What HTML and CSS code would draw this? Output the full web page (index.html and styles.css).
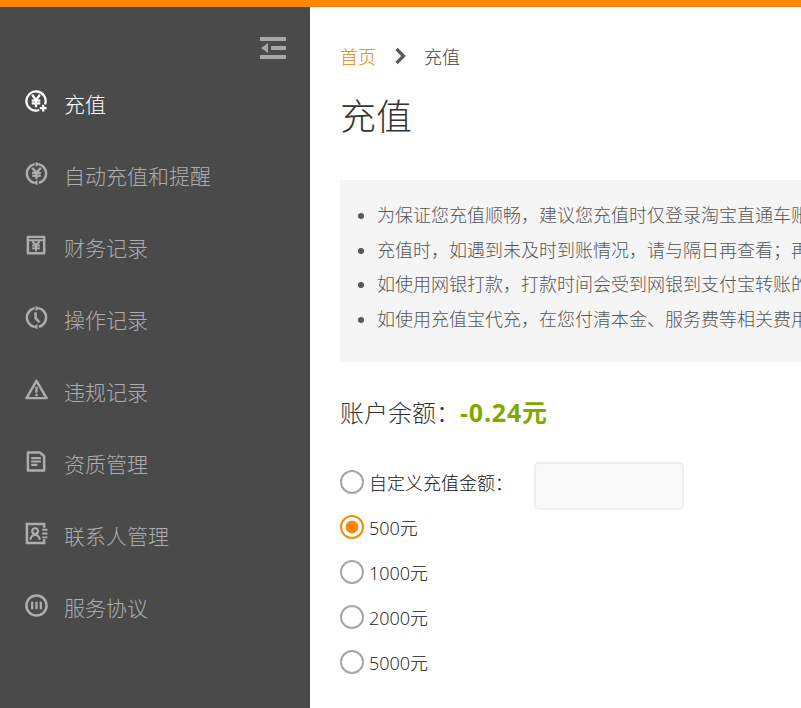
FILE: index.html
```html
<!DOCTYPE html>
<html lang="zh-CN">
<head>
  <meta charset="UTF-8">
  <title>充值</title>
  <link rel="stylesheet" href="styles.css">
</head>
<body>

  <div class="top-line"></div>

  <div class="layout">
    <div class="sidebar">
      <div class="toggle-row">
        <svg class="toggle" width="26" height="22" viewBox="0 0 26 22">
          <path d="M0 0h26v4H0zM0 18h26v4H0zM11 9h15v4H11zM8 6v10L1 11z" fill="#a6a6a6"/>
        </svg>
      </div>

      <ul class="menu">
        <li class="menu-item active">
          <svg class="menu-icon" viewBox="0 0 24 24">
            <path d="M20.900 14.900A10 10 0 1 0 14.900 20.900" fill="none" stroke="currentColor" stroke-width="2.400"/>
            <path d="M7.500 5l4 5.500 4-5.500M7 11h9M7 14h9M11.500 10.500V18" fill="none" stroke="currentColor" stroke-width="2.400"/>
            <path d="M19 15.500v7M15.500 19h7" fill="none" stroke="currentColor" stroke-width="2.400"/>
          </svg>
          <span>充值</span>
        </li>
        <li class="menu-item">
          <svg class="menu-icon" viewBox="0 0 24 24">
            <path d="M14 2.200A10 10 0 0 1 14.500 21.700M9.500 21.700A10 10 0 0 1 10 2.200" fill="none" stroke="currentColor" stroke-width="2.600"/>
            <path d="M11 -.5l4.500 2.800L11 5.200zM13 18.800l-4.500 2.900 4.500 2.800z" fill="currentColor"/>
            <path d="M7.500 6l4.500 5 4.500-5M7.500 11.500h9M7.500 14.500h9M12 11v7" fill="none" stroke="currentColor" stroke-width="2.400"/>
          </svg>
          <span>自动充值和提醒</span>
        </li>
        <li class="menu-item">
          <svg class="menu-icon" viewBox="0 0 24 24">
            <path d="M3 3h17v17H3z" fill="none" stroke="currentColor" stroke-width="2.600" stroke-linejoin="round"/>
            <path d="M3 6.500h17" stroke="currentColor" stroke-width="2"/>
            <path d="M7.500 7.500l4 4 4-4M7.500 12h8M7.500 14.800h8M11.500 11.500V18" fill="none" stroke="currentColor" stroke-width="2.200"/>
          </svg>
          <span>财务记录</span>
        </li>
        <li class="menu-item">
          <svg class="menu-icon" viewBox="0 0 24 24">
            <path d="M14 2.200A10 10 0 0 1 14.500 21.700M9.500 21.700A10 10 0 0 1 10 2.200" fill="none" stroke="currentColor" stroke-width="2.600"/>
            <path d="M11 -.5l4.500 2.800L11 5.200zM13 18.800l-4.500 2.900 4.500 2.800z" fill="currentColor"/>
            <path d="M11 6.500V12.500l4 4.500" fill="none" stroke="currentColor" stroke-width="2.600"/>
          </svg>
          <span>操作记录</span>
        </li>
        <li class="menu-item">
          <svg class="menu-icon" viewBox="0 0 24 24">
            <path d="M12 3L22.500 21H1.500z" fill="none" stroke="currentColor" stroke-width="2.600" stroke-linejoin="round"/>
            <path d="M12 9v6.500M12 16.500v2.500" stroke="currentColor" stroke-width="2.400"/>
          </svg>
          <span>违规记录</span>
        </li>
        <li class="menu-item">
          <svg class="menu-icon" viewBox="0 0 24 24">
            <path d="M3 2.500h12.500l4.500 4v15H3z" fill="none" stroke="currentColor" stroke-width="2.600" stroke-linejoin="round"/>
            <path d="M6.500 8.500h10M6.500 12h10M6.500 15.500h6.500" stroke="currentColor" stroke-width="2.200"/>
          </svg>
          <span>资质管理</span>
        </li>
        <li class="menu-item">
          <svg class="menu-icon" viewBox="0 0 24 24">
            <path d="M20 6V2H2v20h18v-4" fill="none" stroke="currentColor" stroke-width="2.600"/>
            <circle cx="10.500" cy="9.500" r="3" fill="none" stroke="currentColor" stroke-width="2.200"/>
            <path d="M5.500 18.500c.5-3.500 2.500-5 5-5s4.500 1.500 5 5" fill="none" stroke="currentColor" stroke-width="2.200"/>
            <path d="M18 8h5.500M18 12h5.500M18 16h5.500" stroke="currentColor" stroke-width="2"/>
          </svg>
          <span>联系人管理</span>
        </li>
        <li class="menu-item">
          <svg class="menu-icon" viewBox="0 0 24 24">
            <circle cx="12" cy="12" r="10.500" fill="none" stroke="currentColor" stroke-width="2.600"/>
            <path d="M7.500 8v8M12 8v8M16.500 8v8" stroke="currentColor" stroke-width="2.400"/>
          </svg>
          <span>服务协议</span>
        </li>
      </ul>
    </div>

    <div class="main">
      <div class="crumbs">
        <a class="crumb-link">首页</a>
        <svg class="crumb-arrow" width="12" height="18" viewBox="0 0 12 18">
          <path d="M2.500 2l7 7-7 7" fill="none" stroke="#595959" stroke-width="3.200"/>
        </svg>
        <span>充值</span>
      </div>

      <h1 class="page-title">充值</h1>

      <ul class="notice">
        <li>为保证您充值顺畅，建议您充值时仅登录淘宝直通车账户，并关闭其他账户页面</li>
        <li>充值时，如遇到未及时到账情况，请与隔日再查看；再未到账请联系客服</li>
        <li>如使用网银打款，打款时间会受到网银到支付宝转账的时间影响</li>
        <li>如使用充值宝代充，在您付清本金、服务费等相关费用后才会到账</li>
      </ul>

      <div class="balance">账户余额：<strong>-0.24元</strong></div>

      <form class="amounts">
        <label class="amount custom">
          <input type="radio" name="amount">
          <span class="radio"></span>
          <span class="amount-text">自定义充值金额：</span>
          <input class="custom-input" type="text">
        </label>
        <label class="amount">
          <input type="radio" name="amount" checked>
          <span class="radio"></span>
          <span class="amount-text">500元</span>
        </label>
        <label class="amount">
          <input type="radio" name="amount">
          <span class="radio"></span>
          <span class="amount-text">1000元</span>
        </label>
        <label class="amount">
          <input type="radio" name="amount">
          <span class="radio"></span>
          <span class="amount-text">2000元</span>
        </label>
        <label class="amount">
          <input type="radio" name="amount">
          <span class="radio"></span>
          <span class="amount-text">5000元</span>
        </label>
      </form>
    </div>
  </div>

</body>
</html>
```

FILE: styles.css
```css
html, body {
  height: 100%;
}

body {
  font-family: "Open Sans", "Noto Sans CJK SC", sans-serif;
  background-color: white;
  color: #444;
  margin: 0;
  overflow: hidden;
}

.top-line {
  height: 7px;
  background-color: #ff8800;
}

.layout {
  display: flex;
  height: 701px;
}

.sidebar {
  flex: none;
  width: 310px;
  background-color: #4a4a4a;
}

.toggle-row {
  display: flex;
  justify-content: flex-end;
  padding: 30px 24px 0 0;
  height: 30px;
}

.menu {
  list-style: none;
  margin: 0;
  padding: 0;
}

.menu-item {
  display: flex;
  align-items: center;
  height: 72px;
  padding-left: 25px;
  color: #adadad;
  font-size: 21px;
  font-weight: 300;
}

.menu-item.active {
  color: white;
}

.menu-icon {
  flex: none;
  width: 23px;
  height: 23px;
  margin-right: 16px;
  margin-top: -4px;
}

.main {
  flex: 1;
  min-width: 0;
  padding: 0 0 0 30px;
  overflow: hidden;
}

.crumbs {
  display: flex;
  align-items: center;
  margin-top: 35px;
  height: 28px;
  font-size: 18px;
  font-weight: 300;
  color: #444;
}

.crumb-link {
  color: #e08600;
}

.crumb-arrow {
  margin: 0 18px 0 18px;
}

.page-title {
  margin: 22px 0 0;
  font-size: 36px;
  font-weight: 300;
  line-height: 50px;
  color: #333;
}

.notice {
  margin: 38px 0 0;
  padding: 18px 0 25px 37px;
  background-color: #f5f5f5;
  font-size: 18px;
  font-weight: 300;
  line-height: 34.7px;
  color: #555;
  white-space: nowrap;
  overflow: hidden;
}

.balance {
  margin-top: 32px;
  font-size: 24px;
  font-weight: 300;
  line-height: 36px;
  color: #333;
}

.balance strong {
  color: #80a900;
  font-size: 25px;
  font-weight: bold;
  letter-spacing: 0.8px;
}

.amounts {
  margin-top: 29px;
}

.amount {
  display: flex;
  align-items: center;
  height: 45px;
  font-size: 18px;
  font-weight: 300;
  color: #111;
}

.amount input[type="radio"] {
  display: none;
}

.radio {
  flex: none;
  box-sizing: border-box;
  width: 24px;
  height: 24px;
  margin-right: 5px;
  border: 2px solid #a6a6a6;
  border-radius: 50%;
  background-color: white;
}

.amount input:checked + .radio {
  border-color: #e8920f;
  background: radial-gradient(circle, #ff8800 0, #ff8800 6px, white 6.800px);
}

.custom-input {
  box-sizing: border-box;
  width: 150px;
  height: 48px;
  margin: 7px 0 0 21px;
  background-color: #f9f9f9;
  border: 2px solid #eeeeee;
  border-radius: 5px;
}
```
